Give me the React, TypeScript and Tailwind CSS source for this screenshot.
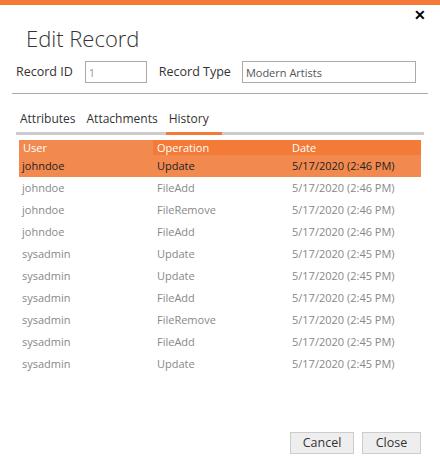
import React from "react";

type Row = { user: string; op: string; date: string };

const rows: Row[] = [
  { user: "johndoe", op: "Update", date: "5/17/2020 (2:46 PM)" },
  { user: "johndoe", op: "FileAdd", date: "5/17/2020 (2:46 PM)" },
  { user: "johndoe", op: "FileRemove", date: "5/17/2020 (2:46 PM)" },
  { user: "johndoe", op: "FileAdd", date: "5/17/2020 (2:46 PM)" },
  { user: "sysadmin", op: "Update", date: "5/17/2020 (2:45 PM)" },
  { user: "sysadmin", op: "Update", date: "5/17/2020 (2:45 PM)" },
  { user: "sysadmin", op: "FileAdd", date: "5/17/2020 (2:45 PM)" },
  { user: "sysadmin", op: "FileRemove", date: "5/17/2020 (2:45 PM)" },
  { user: "sysadmin", op: "FileAdd", date: "5/17/2020 (2:45 PM)" },
  { user: "sysadmin", op: "Update", date: "5/17/2020 (2:45 PM)" },
];

const tabs = ["Attributes", "Attachments", "History"];

function App() {
  return (
    <div
      className="relative flex h-[464px] w-[440px] flex-col bg-white text-[#333]"
      style={{ fontFamily: '"Segoe UI", "Open Sans", sans-serif' }}
    >
      <div className="h-[5px] bg-[#f47a38]" />

      <button className="absolute right-[13px] top-[8px] flex h-[14px] w-[14px] items-center justify-center text-[14px] font-bold leading-none text-black">
        ✕
      </button>

      <h1 className="mt-[17px] pl-[26px] text-[22px] font-light leading-[32px]">
        Edit Record
      </h1>

      <div className="mt-[7px] flex items-center pl-[16px] text-[12.5px]">
        <span>Record ID</span>
        <input
          readOnly
          value="1"
          className="ml-[12px] h-[22px] w-[62px] border border-[#aaa] px-[3px] text-[11px] text-[#999] outline-none"
        />
        <span className="ml-[12px]">Record Type</span>
        <input
          readOnly
          value="Modern Artists"
          className="ml-[11px] h-[22px] w-[174px] border border-[#aaa] px-[3px] text-[11px] text-[#555] outline-none"
        />
      </div>

      <div className="mx-[12px] mt-[10px] h-px bg-[#aaa]" />

      <div className="mx-[16px] mt-[12px]">
        <div className="flex gap-[11px] pl-[4px] text-[12px] leading-[26px]">
          {tabs.map((t) => (
            <span key={t}>{t}</span>
          ))}
        </div>
        <div className="flex h-[3px] bg-[#ccc]">
          <div className="ml-[150px] w-[56px] bg-[#f47a38]" />
        </div>
      </div>

      <div className="mx-[19px] mt-[5px] text-[11px]">
        <div className="grid h-[15px] grid-cols-[134px_136px_1fr] bg-[#f47a38] leading-[15px] text-white">
          <div className="bg-[#f28a4f] pl-[4px]">User</div>
          <div className="pl-[4px]">Operation</div>
          <div className="pl-[3px]">Date</div>
        </div>
        {rows.map((r, i) => (
          <div
            key={i}
            className={
              i === 0
                ? "grid h-[22px] grid-cols-[134px_136px_1fr] items-center bg-[#f28a4f] text-[#222]"
                : "grid h-[22px] grid-cols-[134px_136px_1fr] items-center text-[#888]"
            }
          >
            <div className="pl-[3px]">{r.user}</div>
            <div className="pl-[4px]">{r.op}</div>
            <div className="pl-[3px]">{r.date}</div>
          </div>
        ))}
      </div>

      <div className="mt-auto mb-[10px] flex justify-end gap-[8px] pr-[19px]">
        <button className="h-[22px] w-[64px] border border-[#ccc] bg-[#eee] text-[12.5px]">
          Cancel
        </button>
        <button className="h-[22px] w-[59px] border border-[#ccc] bg-[#eee] text-[12.5px]">
          Close
        </button>
      </div>
    </div>
  );
}

export default App;
